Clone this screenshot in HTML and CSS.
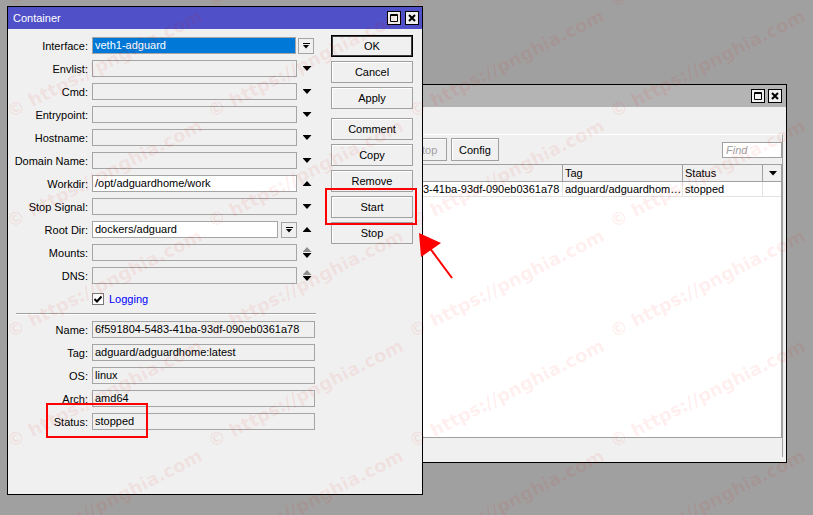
FILE: index.html
```html
<!DOCTYPE html>
<html lang="en">
<head>
    <meta charset="UTF-8">
    <meta name="viewport" content="width=device-width, initial-scale=1.0">
    <title>Container</title>
    <link rel="stylesheet" href="styles.css">
</head>
<body>
    <div class="desktop">

        <!-- Containers list (inactive window, behind) -->
        <div class="window list-window">
            <div class="titlebar inactive">
                <span class="title"></span>
                <div class="title-buttons">
                    <span class="tb-btn"><svg width="12" height="12" viewBox="0 0 12 12"><path d="M2.5 2.5h7v7h-7z M2.5 3.5h7" fill="none" stroke="#000"/></svg></span>
                    <span class="tb-btn"><svg width="12" height="12" viewBox="0 0 12 12"><path d="M3 3l6 6M9 3l-6 6" fill="none" stroke="#000" stroke-width="2"/></svg></span>
                </div>
            </div>
            <div class="tabs"></div>
            <div class="panel">
                <div class="toolbar">
                    <button class="tool">Start</button>
                    <button class="tool disabled">Stop</button>
                    <button class="tool">Config</button>
                    <input class="find" type="text" placeholder="Find">
                </div>
                <div class="table">
                    <div class="row head">
                        <div class="cell c-name">Name</div>
                        <div class="cell c-tag">Tag</div>
                        <div class="cell c-status">Status</div>
                        <div class="cell c-menu"><span class="arr down"></span></div>
                    </div>
                    <div class="row">
                        <div class="cell c-name">6f591804-5483-41ba-93df-090eb0361a78</div>
                        <div class="cell c-tag">adguard/adguardhome:latest</div>
                        <div class="cell c-status">stopped</div>
                        <div class="cell c-menu"></div>
                    </div>
                </div>
                <div class="statusbar"></div>
            </div>
        </div>

        <!-- Container settings dialog -->
        <div class="window form-window">
            <div class="titlebar">
                <span class="title">Container</span>
                <div class="title-buttons">
                    <span class="tb-btn"><svg width="12" height="12" viewBox="0 0 12 12"><path d="M2.5 2.5h7v7h-7z M2.5 3.5h7" fill="none" stroke="#000"/></svg></span>
                    <span class="tb-btn"><svg width="12" height="12" viewBox="0 0 12 12"><path d="M3 3l6 6M9 3l-6 6" fill="none" stroke="#000" stroke-width="2"/></svg></span>
                </div>
            </div>
            <div class="dialog">
                <div class="form">
                    <div class="grid">
                        <label>Interface:</label>
                        <div class="field selected">veth1-adguard</div>
                        <span class="combo-btn"><span class="bar"></span><span class="arr small down"></span></span>

                        <label>Envlist:</label>
                        <div class="field"></div>
                        <span class="arrows"><span class="arr down"></span></span>

                        <label>Cmd:</label>
                        <div class="field"></div>
                        <span class="arrows"><span class="arr down"></span></span>

                        <label>Entrypoint:</label>
                        <div class="field"></div>
                        <span class="arrows"><span class="arr down"></span></span>

                        <label>Hostname:</label>
                        <div class="field"></div>
                        <span class="arrows"><span class="arr down"></span></span>

                        <label>Domain Name:</label>
                        <div class="field"></div>
                        <span class="arrows"><span class="arr down"></span></span>

                        <label>Workdir:</label>
                        <div class="field edit">/opt/adguardhome/work</div>
                        <span class="arrows"><span class="arr up"></span></span>

                        <label>Stop Signal:</label>
                        <div class="field"></div>
                        <span class="arrows"><span class="arr down"></span></span>

                        <label>Root Dir:</label>
                        <div class="combo">
                            <div class="field edit">dockers/adguard</div>
                            <span class="combo-btn"><span class="bar"></span><span class="arr small down"></span></span>
                        </div>
                        <span class="arrows"><span class="arr up"></span></span>

                        <label>Mounts:</label>
                        <div class="field"></div>
                        <span class="arrows"><span class="arr up dim"></span><span class="arr down"></span></span>

                        <label>DNS:</label>
                        <div class="field"></div>
                        <span class="arrows"><span class="arr up dim"></span><span class="arr down"></span></span>

                        <span></span>
                        <div class="check">
                            <span class="box"><svg width="10" height="10" viewBox="0 0 10 10"><path d="M1.5 5l2.5 2.5l4.5-5" fill="none" stroke="#000" stroke-width="2"/></svg></span>
                            <span class="check-label">Logging</span>
                        </div>
                    </div>

                    <div class="separator"></div>

                    <div class="grid info">
                        <label>Name:</label>
                        <div class="field">6f591804-5483-41ba-93df-090eb0361a78</div>
                        <label>Tag:</label>
                        <div class="field">adguard/adguardhome:latest</div>
                        <label>OS:</label>
                        <div class="field">linux</div>
                        <label>Arch:</label>
                        <div class="field">amd64</div>
                        <label>Status:</label>
                        <div class="field">stopped</div>
                    </div>
                </div>

                <div class="actions">
                    <button class="btn default">OK</button>
                    <button class="btn">Cancel</button>
                    <button class="btn">Apply</button>
                    <button class="btn spaced">Comment</button>
                    <button class="btn">Copy</button>
                    <button class="btn">Remove</button>
                    <button class="btn">Start</button>
                    <button class="btn">Stop</button>
                </div>
            </div>
        </div>

        <!-- red markup -->
        <div class="mark mark-start"></div>
        <div class="mark mark-status"></div>
        <svg class="pointer" width="813" height="515" viewBox="0 0 813 515">
            <line x1="452" y1="278" x2="429" y2="247" stroke="#f00" stroke-width="2"/>
            <polygon points="419,233 441,243 421,257" fill="#f00"/>
        </svg>

        <div class="watermark"></div>
    </div>

    <script>
        // tile the site stamp diagonally over the whole desktop
        const stamp = document.querySelector('.watermark');
        for (let y = 3; y <= 553; y += 110) {
            for (let x = -193; x <= 812; x += 201) {
                const s = document.createElement('span');
                s.textContent = '© https://pnghia.com';
                s.style.left = x + 'px';
                s.style.top = y + 'px';
                stamp.appendChild(s);
            }
        }
    </script>
</body>
</html>
```

FILE: styles.css
```css
* {
    box-sizing: border-box;
}

body {
    margin: 0;
    background: #a0a0a0;
    font-family: "Liberation Sans", Arial, sans-serif;
    font-size: 11px;
    color: #000;
}

button,
input {
    font: inherit;
    color: inherit;
    margin: 0;
}

.desktop {
    position: relative;
    width: 813px;
    height: 515px;
    overflow: hidden;
}

/* ---- windows ---- */

.window {
    position: absolute;
    display: flex;
    flex-direction: column;
    border: 1px solid #000;
    background: #f0f0f0;
}

.form-window {
    left: 7px;
    top: 6px;
    width: 416px;
    height: 489px;
    z-index: 2;
}

.list-window {
    left: 340px;
    top: 84px;
    width: 447px;
    height: 379px;
    z-index: 1;
}

.titlebar {
    flex: none;
    height: 22px;
    display: flex;
    align-items: center;
    justify-content: space-between;
    padding: 0 3px 0 5px;
    background: #5050c8;
    color: #fff;
}

.titlebar.inactive {
    background: #b4b4b4;
    padding-right: 4px;
}

.title-buttons {
    display: flex;
    gap: 4px;
}

.titlebar.inactive .title-buttons {
    gap: 3px;
}

.tb-btn {
    width: 14px;
    height: 14px;
    display: flex;
    border: 1px solid #000;
    background: #f0f0f0;
}

/* ---- container dialog ---- */

.dialog {
    flex: 1;
    display: flex;
    align-items: flex-start;
}

.form {
    width: 308px;
    padding-top: 8px;
}

.grid {
    display: grid;
    grid-template-columns: 84px 205px 19px;
    grid-auto-rows: 17px;
    row-gap: 6px;
    align-items: center;
}

.grid.info {
    grid-template-columns: 84px 223px;
}

.grid label {
    text-align: right;
    padding-right: 4px;
    white-space: nowrap;
}

.field {
    height: 17px;
    padding: 0 2px;
    border: 1px solid #a5a5a5;
    background: #f0f0f0;
    line-height: 15px;
    white-space: nowrap;
    overflow: hidden;
}

.field.edit {
    background: #fff;
}

.field.selected {
    background: #0078d7;
    color: #fff;
    margin-right: 1px;
}

.combo {
    display: flex;
    gap: 3px;
    align-items: center;
}

.combo .field {
    flex: 1;
}

.combo-btn {
    width: 16px;
    height: 16px;
    display: flex;
    flex-direction: column;
    align-items: center;
    justify-content: center;
    gap: 1px;
    border: 1px solid #a5a5a5;
    background: #f0f0f0;
}

.grid > .combo-btn {
    margin-left: 1px;
}

.combo-btn .bar {
    width: 7px;
    height: 1px;
    background: #000;
}

.arrows {
    display: flex;
    flex-direction: column;
    align-items: center;
    gap: 1px;
    padding-left: 1px;
}

.arr {
    display: block;
    width: 9px;
    height: 5px;
    background: #000;
}

.arr.small {
    width: 7px;
    height: 4px;
}

.arr.down {
    clip-path: polygon(0 0, 100% 0, 50% 100%);
}

.arr.up {
    clip-path: polygon(50% 0, 100% 100%, 0 100%);
}

.arr.dim {
    background: #8e8e8e;
}

.check {
    display: flex;
    align-items: center;
    gap: 5px;
}

.check .box {
    width: 12px;
    height: 12px;
    display: flex;
    align-items: center;
    justify-content: center;
    border: 1px solid #7a7a7a;
    background: #fff;
}

.check-label {
    color: #0000ff;
}

.separator {
    height: 2px;
    margin: 6px 0 6px 8px;
    border-top: 1px solid #a0a0a0;
    border-bottom: 1px solid #fff;
}

.actions {
    width: 82px;
    margin-left: 15px;
    padding-top: 6px;
    display: flex;
    flex-direction: column;
    gap: 4px;
}

.btn {
    height: 22px;
    padding: 0;
    border: 1px solid #a0a0a0;
    background: #f0f0f0;
    box-shadow: inset 1px 1px 0 #fff;
}

.btn.default {
    border-color: #000;
    box-shadow: inset 0 0 0 1px #3c3c3c;
}

.btn.spaced {
    margin-top: 5px;
}

/* ---- containers list ---- */

.tabs {
    flex: none;
    height: 27px;
}

.panel {
    flex: 1;
    display: flex;
    flex-direction: column;
    margin: 0 3px 5px 4px;
    border-top: 1px solid #fff;
    border-right: 1px solid #a0a0a0;
}

.toolbar {
    flex: none;
    display: flex;
    align-items: center;
    gap: 4px;
    height: 26px;
    padding: 3px 0 0 14px;
}

.tool {
    height: 23px;
    min-width: 42px;
    padding: 0 7px;
    border: 1px solid #a0a0a0;
    background: #f0f0f0;
    box-shadow: inset 1px 1px 0 #fff;
}

.tool.disabled {
    color: #a0a0a0;
}

.find {
    width: 60px;
    height: 16px;
    margin-left: auto;
    padding: 0 3px;
    border: 1px solid #a0a0a0;
    background: #fff;
    outline: none;
}

.find::placeholder {
    color: #a0a0a0;
    font-style: italic;
}

.table {
    flex: 1;
    margin-top: 3px;
    border: 1px solid #a0a0a0;
    background: #fff;
}

.row {
    display: flex;
    height: 15px;
    border-bottom: 1px solid #e3e3e3;
}

.row.head {
    height: 17px;
    background: #f0f0f0;
    border-bottom-color: #a0a0a0;
}

.cell {
    padding-left: 2px;
    line-height: 14px;
    white-space: nowrap;
    overflow: hidden;
    text-overflow: ellipsis;
    border-right: 1px solid #e3e3e3;
}

.row.head .cell {
    line-height: 16px;
    border-right-color: #a0a0a0;
}

.c-name {
    width: 217px;
    padding-left: 9px;
}

.c-tag {
    width: 120px;
}

.c-status {
    width: 80px;
}

.c-menu {
    width: 18px;
    border-right: none;
    display: flex;
    align-items: center;
    justify-content: center;
}

.statusbar {
    flex: none;
    height: 19px;
}

/* ---- red markup ---- */

.mark {
    position: absolute;
    border: 2px solid #f00;
    z-index: 5;
}

.mark-start {
    left: 325px;
    top: 188px;
    width: 92px;
    height: 37px;
}

.mark-status {
    left: 46px;
    top: 403px;
    width: 102px;
    height: 35px;
}

.pointer {
    position: absolute;
    left: 0;
    top: 0;
    z-index: 5;
}

/* ---- site stamp ---- */

.watermark {
    position: absolute;
    inset: 0;
    z-index: 6;
    pointer-events: none;
}

.watermark span {
    position: absolute;
    margin-top: -11px;
    line-height: 22px;
    font-family: "DejaVu Sans", sans-serif;
    font-weight: bold;
    font-size: 18px;
    white-space: nowrap;
    color: rgba(255, 0, 0, 0.08);
    transform-origin: 0 50%;
    transform: rotate(-27deg);
}
```
